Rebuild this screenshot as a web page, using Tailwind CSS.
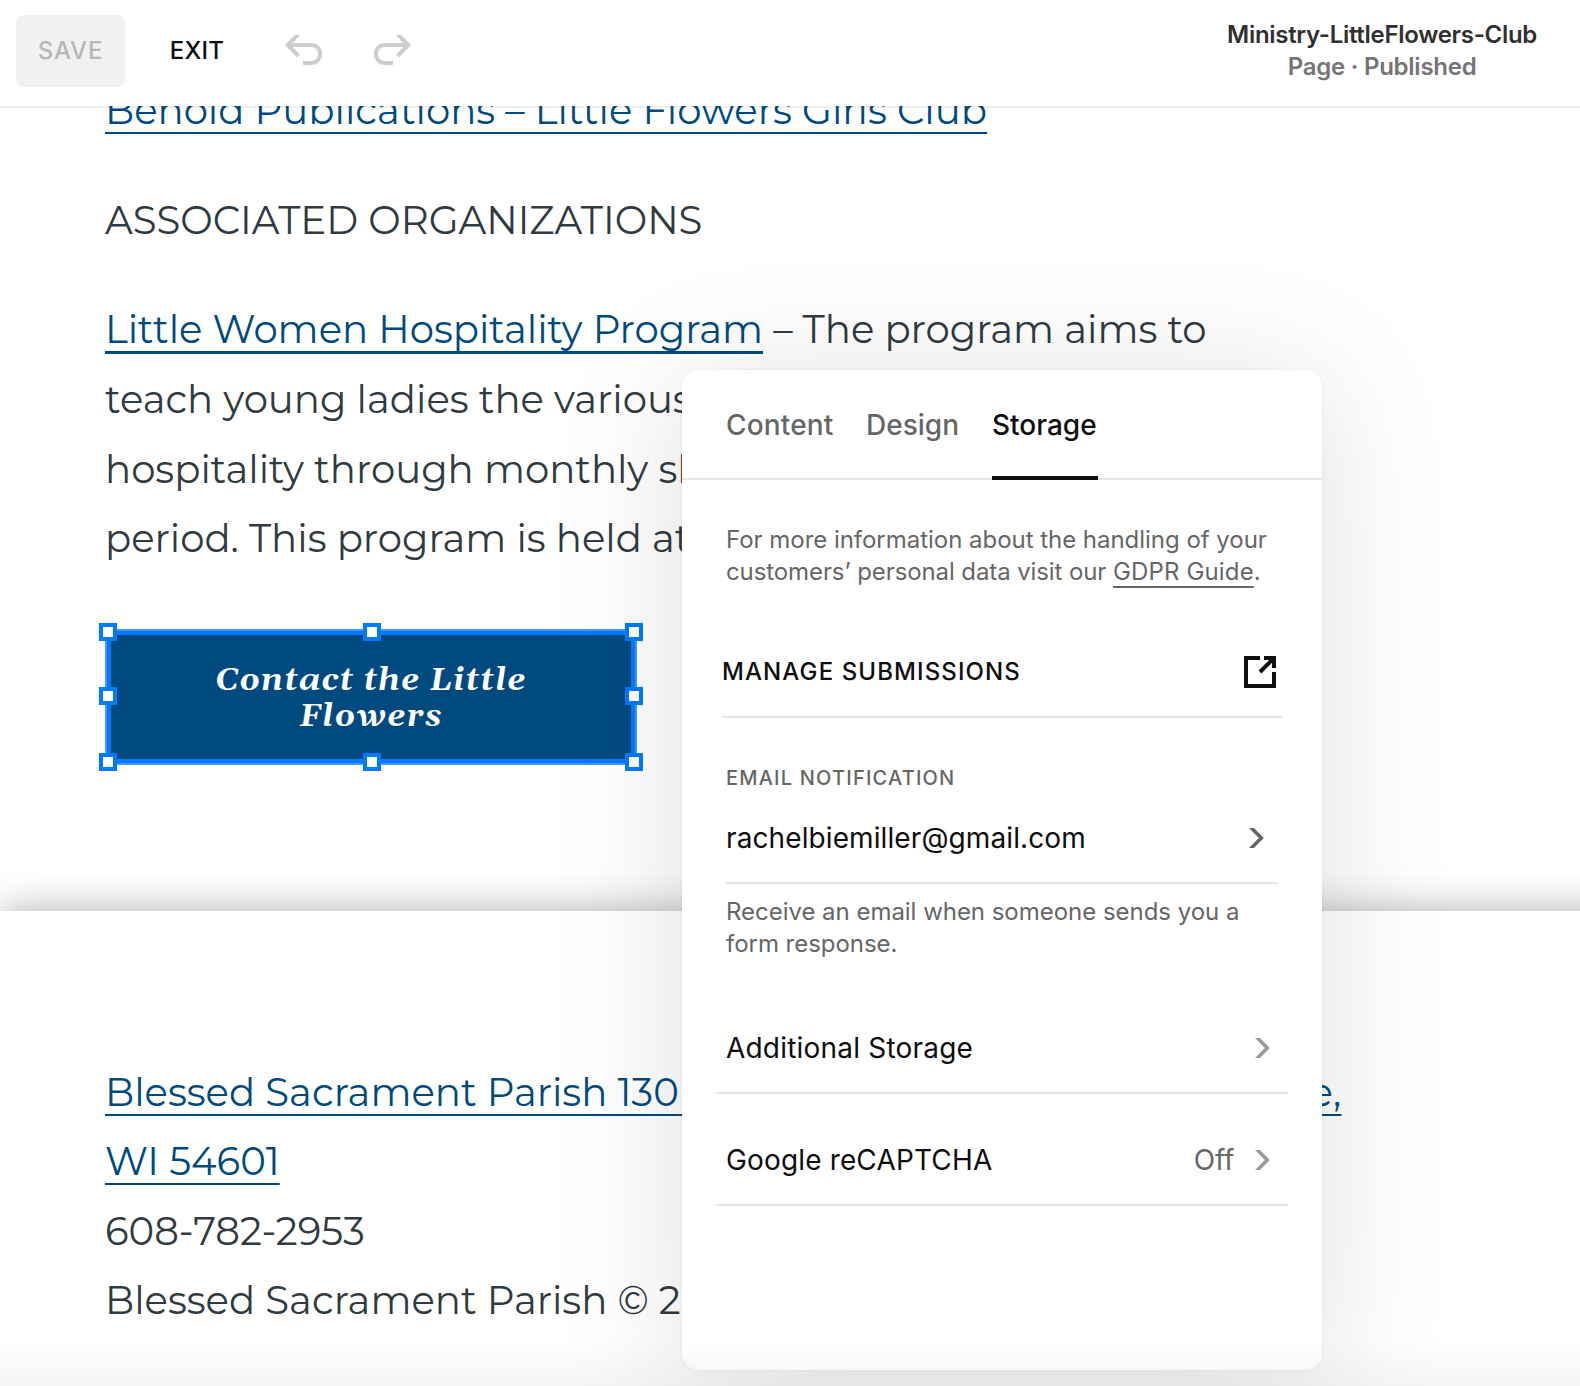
<!DOCTYPE html>
<html lang="en"><head><meta charset="utf-8"><title>Editor</title>
<script src="https://cdn.jsdelivr.net/npm/@tailwindcss/browser@4"></script></head>
<body class="bg-white font-['Montserrat','Inter',sans-serif]">
<div class="relative w-[1580px] h-[1386px] overflow-hidden flex flex-col">
  <header class="relative z-10 h-[108px] shrink-0 border-b-2 border-black/6 flex items-start font-['Inter',sans-serif]">
    <div class="absolute inset-x-0 top-0 -z-10 h-[106px] bg-white"></div>
    <button class="ml-4 mt-[15px] w-[109px] h-[72px] rounded-lg bg-[#f1f1f1] text-[#b7b7b7] text-[24px] font-medium tracking-[0.8px]">SAVE</button>
    <button class="ml-[28px] mt-[15px] w-[88px] h-[72px] text-[#0e0e0e] text-[24px] font-medium tracking-[0.3px]">EXIT</button>
    <svg class="ml-[44px] mt-[35px]" width="37" height="30" viewBox="0 0 37 30" fill="none" stroke="#cecece" stroke-width="4"><path d="M13.5 -1L2.7 10L13.5 21M2.5 10H26.5A8.7 9 0 0 1 26.5 28H18"/></svg>
    <svg class="ml-[52px] mt-[35px]" width="37" height="30" viewBox="0 0 37 30" fill="none" stroke="#cecece" stroke-width="4"><path d="M23.5 -1L34.3 10L23.5 21M34.5 10H10.5A8.7 9 0 0 0 10.5 28H19"/></svg>
    <div class="ml-auto mr-[43px] mt-[19px] text-center text-[24px] leading-8 font-semibold text-[#303030] tracking-[-0.3px]">
      <div>Ministry-LittleFlowers-Club</div><div class="text-[#757575] tracking-[-0.25px]">Page · Published</div>
    </div>
  </header>
  <section class="relative h-[803px] shrink-0 pl-[105px] text-[38.66px] leading-[69.5px] text-[#2f3b40] whitespace-nowrap">
    <p class="-mt-[32px] h-[69px]"><a class="inline-block h-[58px] border-b-2 border-[#004a80] text-[#004a80]">Behold Publications – Little Flowers Girls Club</a></p>
    <p class="mt-[41px]">ASSOCIATED ORGANIZATIONS</p>
    <p class="mt-[39px] mb-px"><a class="underline decoration-[3px] underline-offset-[8px] text-[#004a80]">Little Women Hospitality Program</a> – The program aims to</p>
    <p>teach young ladies the various</p>
    <p>hospitality through monthly sh</p>
    <p>period. This program is held at</p>
    <div class="relative mt-[55px] w-[532px] h-[136px] border-2 border-[#4795ff]">
      <div class="h-full border-4 border-[#007aff] bg-[#004a80] text-white text-center font-['Gelasio','Georgia','Liberation_Serif',serif] italic font-bold text-[32px] leading-9 tracking-[1.25px] pt-[28px]"><div>Contact the Little</div><div>Flowers</div></div>
      <i class="absolute left-[-8px] top-[-8px] size-[18px] border-4 border-[#007aff] bg-white"></i>
      <i class="absolute left-[256px] top-[-8px] size-[18px] border-4 border-[#007aff] bg-white"></i>
      <i class="absolute left-[518px] top-[-8px] size-[18px] border-4 border-[#007aff] bg-white"></i>
      <i class="absolute left-[-8px] top-[56px] size-[18px] border-4 border-[#007aff] bg-white"></i>
      <i class="absolute left-[518px] top-[56px] size-[18px] border-4 border-[#007aff] bg-white"></i>
      <i class="absolute left-[-8px] top-[122px] size-[18px] border-4 border-[#007aff] bg-white"></i>
      <i class="absolute left-[256px] top-[122px] size-[18px] border-4 border-[#007aff] bg-white"></i>
      <i class="absolute left-[518px] top-[122px] size-[18px] border-4 border-[#007aff] bg-white"></i>
    </div>
  </section>
  <footer class="relative w-[1640px] grow bg-white shadow-[0_0_38px_rgba(0,0,0,0.32)] pl-[105px] pt-[147px] text-[38.66px] leading-[69.35px] text-[#2f3b40] whitespace-nowrap">
    <p><a class="underline decoration-2 underline-offset-[8px] text-[#004a80]"><span>Blessed Sacrament Parish 130</span><span class="tracking-[0.25px]"> Losey Boulevard South La Crosse,</span></a></p>
    <p><a class="underline decoration-2 underline-offset-[8px] text-[#004a80]">WI 54601</a></p>
    <p>608-782-2953</p>
    <p>Blessed Sacrament Parish © 2</p>
  </footer>
  <aside class="absolute left-[682px] top-[370px] w-[640px] h-[1000px] rounded-2xl bg-white shadow-[0_12px_134px_rgba(0,0,0,0.13),0_0_3px_rgba(0,0,0,0.08)] font-['Inter',sans-serif] text-[#0e0e0e] whitespace-nowrap">
    <nav class="h-[110px] border-b-2 border-[#e6e6e6] pl-11 flex text-[28px] font-medium text-[#666] leading-[110px]">
      <span class="w-[140px] tracking-[0.15px]">Content</span><span class="w-[125px]">Design</span><span class="ml-px w-[106px] h-[110px] border-b-4 border-[#0e0e0e] text-[#0e0e0e]">Storage</span>
    </nav>
    <p class="pl-11 pt-[44px] text-[24px] leading-8 text-[#666] tracking-[-0.03px]"><span>For more information about the handling of your</span><br><span class="tracking-[-0.1px]">customers’ personal data visit our <a class="underline decoration-2 underline-offset-[6px] tracking-[0.15px]">GDPR Guide</a>.</span></p>
    <div class="ml-10 mr-10 mt-[38px] h-[92px] border-b-2 border-[#e6e6e6] flex items-center justify-between pt-[2px] pr-[6px] text-[24px] font-medium tracking-[1.1px]"><span>MANAGE SUBMISSIONS</span>
      <svg width="32" height="32" viewBox="0 0 32 32" fill="none" stroke="#0e0e0e" stroke-width="4"><path d="M16 2H2V30H30V16M20 2H30V12M30 2L16 16"/></svg></div>
    <h3 class="pl-11 mt-[44px] text-[20px] leading-8 font-medium text-[#666] tracking-[1.2px]">EMAIL NOTIFICATION</h3>
    <div class="ml-11 w-[552px] h-[90px] border-b-2 border-[#e6e6e6] flex items-center justify-between pr-[13px] text-[28px] tracking-[0.1px]"><span class="pb-px">rachelbiemiller@gmail.com</span>
      <svg width="16" height="20" viewBox="0 0 16 20" fill="none" stroke="#666" stroke-width="3.6"><path d="M1.5 -1L12.3 10L1.5 21"/></svg></div>
    <p class="pl-11 pt-[12px] text-[24px] leading-8 text-[#666] tracking-[-0.03px]"><span>Receive an email when someone sends you a</span><br><span>form response.</span></p>
    <div class="ml-[34px] w-[572px] mt-[44px] h-[90px] border-b-2 border-[#e6e6e6] flex items-center justify-between pl-[10px] pr-[17px] text-[28px] tracking-[0.2px]"><span class="pb-px">Additional Storage</span>
      <svg width="16" height="20" viewBox="0 0 16 20" fill="none" stroke="#999" stroke-width="3.6"><path d="M1.5 -1L12.3 10L1.5 21"/></svg></div>
    <div class="ml-[34px] w-[572px] h-[112px] pt-[22px] border-b-2 border-[#e6e6e6] flex items-center pl-[10px] pr-[17px] text-[28px] tracking-[0.15px]"><span class="pb-px">Google reCAPTCHA</span><span class="ml-auto mr-[21px] pb-px text-[#666] tracking-[-0.3px]">Off</span>
      <svg width="16" height="20" viewBox="0 0 16 20" fill="none" stroke="#999" stroke-width="3.6"><path d="M1.5 -1L12.3 10L1.5 21"/></svg></div>
  </aside>
  <div class="absolute inset-x-0 bottom-0 h-[48px] bg-linear-to-b from-transparent to-black/4"></div>
</div>
</body></html>
